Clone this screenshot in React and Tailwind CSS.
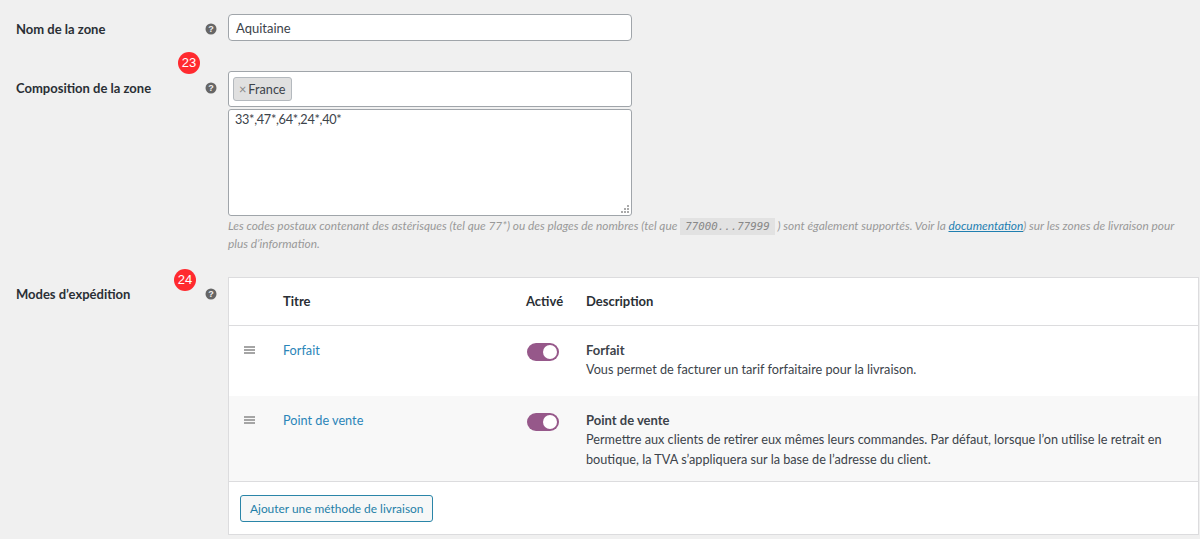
const font = { fontFamily: 'Lato, sans-serif' };

function Help() {
  return (
    <svg width="12" height="12" viewBox="0 0 12 12" className="block">
      <circle cx="6" cy="6" r="5.5" fill="#666" />
      <text x="6" y="9.2" textAnchor="middle" fontSize="9" fontWeight="700" fill="#f0f0f0" fontFamily="Liberation Sans, sans-serif">?</text>
    </svg>
  );
}

function Toggle() {
  return (
    <div className="w-8 h-[18px] rounded-full bg-[#96588a] relative">
      <div className="absolute right-[2px] top-[2px] w-[14px] h-[14px] rounded-full bg-white" />
    </div>
  );
}

function Handle() {
  return (
    <div className="flex flex-col gap-[1px] w-[11px]">
      <div className="h-[2px] bg-[#a5a5a5]" />
      <div className="h-[2px] bg-[#a5a5a5]" />
      <div className="h-[2px] bg-[#a5a5a5]" />
    </div>
  );
}

function Badge({ children, className }) {
  return (
    <div className={"absolute w-[22px] h-[22px] rounded-full bg-[#ff2a2f] text-white text-[13px] flex items-center justify-center " + className} style={{ fontFamily: '"Liberation Sans", sans-serif' }}>
      {children}
    </div>
  );
}

function Method({ title, name, desc, bg, height }) {
  return (
    <div className={"flex " + bg + " " + height}>
      <div className="w-[54px] pl-[15px] pt-[20px] shrink-0"><Handle /></div>
      <div className="w-[244px] pt-[14px] shrink-0 text-[#2a85b8] text-[12.7px] leading-[20px]">{title}</div>
      <div className="w-[59px] pt-[17px] shrink-0"><Toggle /></div>
      <div className="flex-1 pt-[14px] text-[#3c434a] pr-[20px]">
        <div className="font-bold leading-[20px]">{name}</div>
        <div className="text-[12.7px] leading-[19.5px]">{desc}</div>
      </div>
    </div>
  );
}

export default function App() {
  return (
    <div className="relative w-[1200px] h-[539px] overflow-hidden bg-[#f0f0f0] text-[13px] text-[#3c434a] pt-[14px]" style={font}>
      <Badge className="left-[178px] top-[52px]">23</Badge>
      <Badge className="left-[174px] top-[269px]">24</Badge>

      <div className="flex">
        <div className="w-[205px] pl-[16px] pt-[5px] font-bold text-[#2a2f35] leading-[20px] shrink-0">Nom de la zone</div>
        <div className="w-[23px] pt-[9px] shrink-0"><Help /></div>
        <div className="w-[404px] h-[27px] bg-white border border-[#a0a5aa] rounded-[4px] pl-[7px] leading-[26px]">Aquitaine</div>
      </div>

      <div className="flex mt-[30px]">
        <div className="w-[205px] pl-[16px] pt-[7px] font-bold text-[#2a2f35] leading-[20px] shrink-0">Composition de la zone</div>
        <div className="w-[23px] pt-[11px] shrink-0"><Help /></div>
        <div className="w-[404px] shrink-0">
          <div className="h-[36px] bg-white border border-[#a0a5aa] rounded-[3px] pl-[4px] pt-[5px]">
            <div className="inline-flex items-center h-[24px] px-[5px] gap-[2px] bg-[#e0e0e0] border border-[#b4b9be] rounded-[3px] text-[12.7px] leading-[22px]">
              <span className="text-[#888]">×</span><span>France</span>
            </div>
          </div>
          <div className="relative h-[107px] mt-[2px] bg-white border border-[#a0a5aa] rounded-[3px] pl-[6px] text-[12.7px] tracking-[-0.3px] leading-[18px]">
            33*,47*,64*,24*,40*
            <svg width="9" height="9" viewBox="0 0 9 9" className="absolute right-[1px] bottom-[1px]">
              <g fill="#aaa">
                <rect x="6" y="0" width="2" height="2" />
                <rect x="3" y="3" width="2" height="2" /><rect x="6" y="3" width="2" height="2" />
                <rect x="0" y="6" width="2" height="2" /><rect x="3" y="6" width="2" height="2" /><rect x="6" y="6" width="2" height="2" />
              </g>
            </svg>
          </div>
        </div>
      </div>

      <div className="ml-[228px] mt-[1px] w-[960px] text-[11.88px] italic text-[#999] leading-[17px]">
        <div className="whitespace-nowrap">
          <span>Les codes postaux contenant des astérisques (tel que 77*) ou des plages de nombres (tel que </span>
          <code className="px-[5px] py-[2px] bg-[#e2e2e2] text-[#888] text-[10.8px] italic" style={{ fontFamily: '"DejaVu Sans Mono", monospace' }}>77000...77999</code>
          <span> ) sont également supportés. Voir la </span>
          <span className="text-[#1f7fb0] underline">documentation</span>
          <span>) sur les zones de livraison pour</span>
        </div>
        <div>plus d’information.</div>
      </div>

      <div className="flex mt-[25px]">
        <div className="w-[205px] pl-[16px] pt-[7px] font-bold text-[#2a2f35] leading-[20px] shrink-0">Modes d’expédition</div>
        <div className="w-[23px] pt-[11px] shrink-0"><Help /></div>
        <div className="w-[971px] bg-white border border-[#dcdcde]">
          <div className="flex h-[48px] items-center border-b border-[#dcdcde] font-bold text-[#2a2f35]">
            <div className="w-[297px] pl-[54px] shrink-0">Titre</div>
            <div className="w-[60px] shrink-0">Activé</div>
            <div>Description</div>
          </div>
          <Method title="Forfait" name="Forfait" desc="Vous permet de facturer un tarif forfaitaire pour la livraison." bg="bg-white" height="h-[70px]" />
          <Method title="Point de vente" name="Point de vente" desc="Permettre aux clients de retirer eux mêmes leurs commandes. Par défaut, lorsque l’on utilise le retrait en boutique, la TVA s’appliquera sur la base de l’adresse du client." bg="bg-[#f8f8f8]" height="h-[85px]" />
          <div className="border-t border-[#dcdcde] h-[53px] pl-[11px] pt-[13px]">
            <div className="inline-block h-[27px] px-[9px] leading-[25px] text-[11.9px] text-[#1f7fa8] bg-[#f6f7f7] border border-[#2a85a8] rounded-[3px]">Ajouter une méthode de livraison</div>
          </div>
        </div>
      </div>
    </div>
  );
}
